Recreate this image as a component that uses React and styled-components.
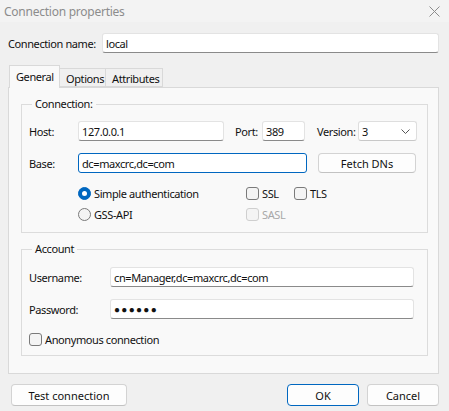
import React from 'react';
import styled, { createGlobalStyle } from 'styled-components';

const GlobalStyle = createGlobalStyle`
  html, body {
    margin: 0;
    padding: 0;
    background: #f0f0f0;
  }
  body {
    font-family: "Noto Sans", "Segoe UI", sans-serif;
    font-size: 11px;
    letter-spacing: -0.4px;
    color: #111111;
  }
  * { box-sizing: border-box; }
`;

const Window = styled.div`
  width: 449px;
  height: 411px;
  display: flex;
  flex-direction: column;
  background: #f0f0f0;
  overflow: hidden;
  white-space: nowrap;
`;

const TitleBar = styled.div`
  height: 22px;
  display: flex;
  align-items: center;
  justify-content: space-between;
  padding: 0 9px 0 4px;
  background: #f3f3f3;
  color: #8c8c8c;
  font-size: 12px;
  letter-spacing: -0.25px;
`;

const CloseIcon = () => (
  <svg width="11" height="11" viewBox="0 0 11 11">
    <path d="M0.5 0.5 L10.5 10.5 M10.5 0.5 L0.5 10.5" stroke="#8c8c8c" strokeWidth="1" fill="none" />
  </svg>
);

const Body = styled.div`
  display: flex;
  flex-direction: column;
  padding: 0 10px 0 8px;
`;

const NameRow = styled.div`
  display: flex;
  align-items: center;
  margin-top: 11px;
  height: 20px;
`;

const NameLabel = styled.span`
  width: 94px;
  flex: none;
`;

const TextBox = styled.input`
  height: ${p => p.$h || 20}px;
  width: ${p => (p.$w ? `${p.$w}px` : 'auto')};
  flex: ${p => (p.$w ? 'none' : '1')};
  min-width: 0;
  padding: 0 3px;
  font: inherit;
  font-size: ${p => p.$fs || 11}px;
  letter-spacing: ${p => (p.$ls !== undefined ? p.$ls : -0.4)}px;
  color: #111111;
  background: #ffffff;
  border: 1px solid ${p => (p.$focus ? '#0067c0' : '#e3e3e3')};
  border-bottom-color: ${p => (p.$focus ? '#0067c0' : '#8a8a8a')};
  border-radius: 3px;
  outline: none;
`;

const TabStrip = styled.div`
  display: flex;
  align-items: flex-end;
  margin-top: 12px;
  height: 22px;
  padding-left: 1px;
  position: relative;
  z-index: 1;
`;

const Tab = styled.div`
  width: ${p => p.$w}px;
  height: ${p => (p.$active ? 23 : 19)}px;
  margin-bottom: ${p => (p.$active ? -1 : 0)}px;
  padding: ${p => (p.$active ? '3px 0 0 6px' : '2px 0 0 6px')};
  background: ${p => (p.$active ? '#f9f9f9' : '#f0f0f0')};
  border: 1px solid #d9d9d9;
  border-bottom: ${p => (p.$active ? 'none' : '1px solid #d9d9d9')};
  margin-left: ${p => (p.$active ? 0 : -1)}px;
  &:first-child { margin-left: 0; }
`;

const Panel = styled.div`
  height: 287px;
  background: #f9f9f9;
  border: 1px solid #d9d9d9;
  padding: 8px 10px 0 12px;
`;

const Group = styled.fieldset`
  margin: 0 0 8px 0;
  padding: 0 0 ${p => p.$pb}px 7px;
  border: 1px solid #dcdcdc;
  border-radius: 0;
  min-width: 0;
`;

const Legend = styled.legend`
  margin-left: 3px;
  padding: 0 3px;
  line-height: 16px;
`;

const Row = styled.div`
  display: flex;
  align-items: center;
  height: 20px;
  margin-top: ${p => p.$mt}px;
`;

const Label = styled.span`
  width: ${p => p.$w}px;
  flex: none;
`;

const InlineLabel = styled.span`
  width: ${p => p.$w}px;
  flex: none;
  margin-left: ${p => p.$ml}px;
`;

const Select = styled.div`
  width: 59px;
  height: 20px;
  display: flex;
  align-items: center;
  justify-content: space-between;
  padding: 0 6px 0 3px;
  background: #ffffff;
  border: 1px solid #dedede;
  border-bottom-color: #c8c8c8;
  border-radius: 3px;
`;

const Chevron = () => (
  <svg width="9" height="5" viewBox="0 0 9 5">
    <path d="M0.5 0.5 L4.5 4.5 L8.5 0.5" stroke="#555" strokeWidth="1" fill="none" />
  </svg>
);

const Button = styled.button`
  width: ${p => p.$w}px;
  height: ${p => p.$h || 22}px;
  margin-left: ${p => p.$ml || 0}px;
  font: inherit;
  color: #111111;
  background: #fdfdfd;
  border: 1px solid ${p => (p.$default ? '#0067c0' : '#d3d3d3')};
  border-bottom-color: ${p => (p.$default ? '#0067c0' : '#c2c2c2')};
  border-radius: 4px;
  padding: 0;
`;

const OptionGrid = styled.div`
  display: grid;
  grid-template-columns: ${p => p.$cols};
  grid-auto-rows: 16px;
  row-gap: 5px;
  margin-top: 12px;
`;

const Option = styled.label`
  display: flex;
  align-items: center;
  grid-column: ${p => p.$col};
  color: ${p => (p.$disabled ? '#a8a8a8' : '#111111')};
`;

const Radio = styled.span`
  width: 13px;
  height: 13px;
  border-radius: 50%;
  flex: none;
  margin-right: 3px;
  background: ${p => (p.$checked ? '#0067c0' : '#f4f4f4')};
  border: 1px solid ${p => (p.$checked ? '#0067c0' : '#7a7a7a')};
  display: flex;
  align-items: center;
  justify-content: center;
  &::after {
    content: '';
    display: ${p => (p.$checked ? 'block' : 'none')};
    width: 5px;
    height: 5px;
    border-radius: 50%;
    background: #ffffff;
  }
`;

const Check = styled.span`
  width: 13px;
  height: 13px;
  flex: none;
  margin-right: 3px;
  border-radius: 3px;
  background: #f4f4f4;
  border: 1px solid ${p => (p.$disabled ? '#cfcfcf' : '#7a7a7a')};
`;

const Footer = styled.div`
  display: flex;
  align-items: center;
  margin-top: 10px;
  padding-left: 3px;
`;

const Spacer = styled.div`
  flex: 1;
`;

export default function App() {
  return (
    <Window>
      <GlobalStyle />
      <TitleBar>
        <span>Connection properties</span>
        <CloseIcon />
      </TitleBar>
      <Body>
        <NameRow>
          <NameLabel>Connection name:</NameLabel>
          <TextBox readOnly value="local" $h={20} />
        </NameRow>

        <TabStrip>
          <Tab $active $w={51}>General</Tab>
          <Tab $w={47}>Options</Tab>
          <Tab $w={58}>Attributes</Tab>
        </TabStrip>

        <Panel>
          <Group $pb={10}>
            <Legend>Connection:</Legend>
            <Row $mt={9}>
              <Label $w={49}>Host:</Label>
              <TextBox readOnly value="127.0.0.1" $w={146} />
              <InlineLabel $ml={11} $w={27}>Port:</InlineLabel>
              <TextBox readOnly value="389" $w={43} />
              <InlineLabel $ml={12} $w={41}>Version:</InlineLabel>
              <Select>
                <span>3</span>
                <Chevron />
              </Select>
            </Row>
            <Row $mt={12}>
              <Label $w={49}>Base:</Label>
              <TextBox readOnly value="dc=maxcrc,dc=com" $w={229} $focus />
              <Button $w={98} $h={20} $ml={11}>Fetch DNs</Button>
            </Row>
            <OptionGrid $cols="49px 168px 48px auto">
              <Option $col={2}><Radio $checked />Simple authentication</Option>
              <Option $col={3}><Check />SSL</Option>
              <Option $col={4}><Check />TLS</Option>
              <Option $col={2}><Radio />GSS-API</Option>
              <Option $col={3} $disabled><Check $disabled />SASL</Option>
            </OptionGrid>
          </Group>

          <Group $pb={8}>
            <Legend>Account</Legend>
            <Row $mt={10}>
              <Label $w={81}>Username:</Label>
              <TextBox readOnly value="cn=Manager,dc=maxcrc,dc=com" $w={304} />
            </Row>
            <Row $mt={12}>
              <Label $w={81}>Password:</Label>
              <TextBox readOnly value="●●●●●●" $w={304} $fs={10} $ls={1.3} />
            </Row>
            <OptionGrid $cols="auto">
              <Option $col={1}><Check />Anonymous connection</Option>
            </OptionGrid>
          </Group>
        </Panel>

        <Footer>
          <Button $w={116}>Test connection</Button>
          <Spacer />
          <Button $w={72} $default>OK</Button>
          <Button $w={72} $ml={8}>Cancel</Button>
        </Footer>
      </Body>
    </Window>
  );
}
